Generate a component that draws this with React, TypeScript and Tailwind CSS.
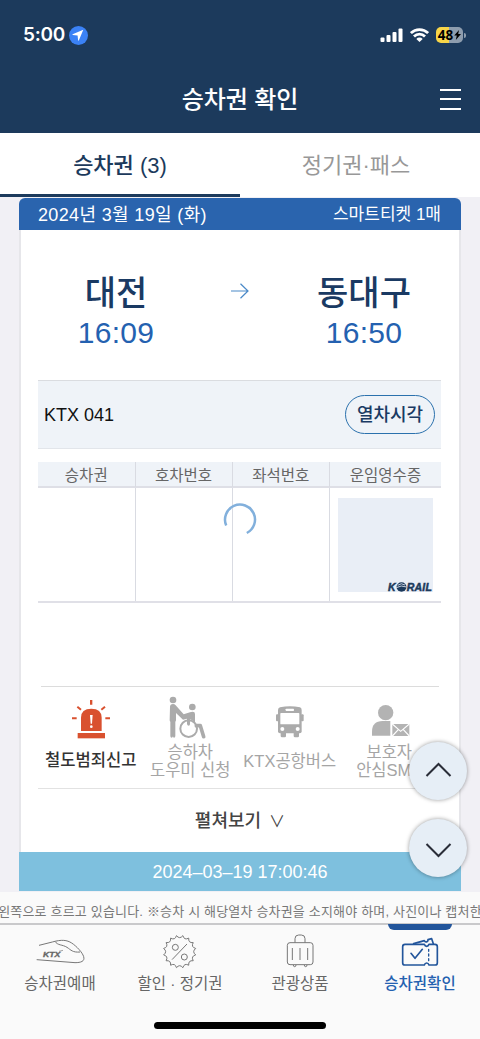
import type { ReactNode } from "react";

const services = [
  { lines: ["철도범죄신고"], icon: <SirenIcon />, active: true },
  { lines: ["승하차", "도우미 신청"], icon: <WheelchairIcon />, active: false },
  { lines: ["KTX공항버스"], icon: <BusIcon />, active: false },
  { lines: ["보호자", "안심SMS"], icon: <GuardianIcon />, active: false },
];

const navItems = [
  { label: "승차권예매", icon: <TrainIcon />, active: false },
  { label: "할인 · 정기권", icon: <DiscountIcon />, active: false },
  { label: "관광상품", icon: <SuitcaseIcon />, active: false },
  { label: "승차권확인", icon: <TicketIcon />, active: true },
];

function SirenIcon() {
  return (
    <svg className="h-[44px] w-[42px]" viewBox="0 0 126 132" fill="#d9512f">
      <path d="M60 15h7v14h-7zM6 67h14v6H6zM106 67h14v6h-14z" />
      <path d="M22 35l11 9M105 35l-11 9" stroke="#d9512f" strokeWidth={6} />
      <path d="M33 108V68q0-27 31-27t31 27v40z" />
      <path d="M23 114h82v16H23z" />
      <path d="M60 60h8l-2 26h-4z" fill="#fff" />
      <circle cx={64} cy={95} r={4} fill="#fff" />
    </svg>
  );
}

function WheelchairIcon() {
  return (
    <svg className="h-[44px] w-[42px]" viewBox="0 0 126 132" fill="#ababab">
      <circle cx={12} cy={15} r={10} />
      <path d="M3 36q0-9 9-9 5 0 8 4l24 27 19-6q3-2 8-2 7 0 7 7v26q-6-8-15-10v14q0 5-4 5t-5-5V71l-12 3-21-20v21q0 3-2 5v43q0 5-4 5-3 0-3-4-1 4-4 4-4 0-4-5V80q-2-2-2-5z" />
      <circle cx={70} cy={36} r={10} />
      <circle cx={59} cy={101} r={25} fill="none" stroke="#ababab" strokeWidth={6} />
      <path d="M82 92h12l10 33" fill="none" stroke="#ababab" strokeWidth={11} strokeLinecap="round" strokeLinejoin="round" />
    </svg>
  );
}

function BusIcon() {
  return (
    <svg className="h-[44px] w-[42px]" viewBox="0 0 126 132" fill="#ababab">
      <path d="M27 45q0-6 6-8 30-6 60 0 5 2 5 8v64q0 6-6 6H33q-6 0-6-6z" />
      <rect x={21} y={58} width={8} height={21} rx={3} />
      <rect x={96} y={58} width={8} height={21} rx={3} />
      <rect x={35} y={108} width={16} height={19} rx={4} />
      <rect x={74} y={108} width={16} height={19} rx={4} />
      <rect x={50} y={41} width={25} height={7} rx={2} fill="#fff" />
      <rect x={34} y={54} width={57} height={34} rx={2} fill="#fff" />
      <circle cx={40} cy={102} r={6} fill="#fff" />
      <circle cx={86} cy={102} r={6} fill="#fff" />
    </svg>
  );
}

function GuardianIcon() {
  return (
    <svg className="h-[44px] w-[42px]" viewBox="0 0 126 132" fill="#b3b3b3">
      <circle cx={53} cy={53} r={23} />
      <path d="M12 122v-12q0-32 32-32h23v44z" />
      <path d="M69 83h60v44H69z" fill="#fff" />
      <path d="M73 87h51v36H73z" />
      <path d="M73 87l25 22 26-22M73 123l18-19M124 123l-18-19" fill="none" stroke="#fff" strokeWidth={3.5} />
    </svg>
  );
}

function TrainIcon() {
  return (
    <svg className="h-[36px] w-[50px]" viewBox="0 0 150 108" fill="none" stroke="#777" strokeWidth={3}>
      <path d="M12 34l40-10C80 16 96 18 110 27c15 10 32 28 36 41 4 14-8 18-26 18L5 77" />
      <path d="M60 22c8 13 22 9 36 18 12 8 17 16 39 14" />
      <text x={24} y={68} fill="#666" stroke="#666" strokeWidth={1} fontSize={24} fontWeight={700} fontStyle="italic" fontFamily="Liberation Sans, sans-serif" textLength={52} lengthAdjust="spacingAndGlyphs">
        KTX
      </text>
      <path d="M72 52l12-3" strokeWidth={2} />
    </svg>
  );
}

function DiscountIcon() {
  const teeth = 16;
  const point = (step: number, r: number) => {
    const a = ((step - 0.5) / teeth) * Math.PI * 2;
    return `${(74 + Math.sin(a) * r).toFixed(1)} ${(53 - Math.cos(a) * r).toFixed(1)}`;
  };
  let d = `M${point(0, 49)}`;
  for (let i = 0; i < teeth; i++) {
    d += `Q${point(i + 0.5, 36)} ${point(i + 1, 49)}`;
  }
  return (
    <svg className="h-[36px] w-[50px]" viewBox="0 0 150 108" fill="none" stroke="#777" strokeWidth={3} strokeLinejoin="round">
      <path d={d + "Z"} />
      <circle cx={61} cy={40} r={9} />
      <circle cx={88} cy={69} r={9} />
      <path d="M95 31L52 76" strokeLinecap="round" />
    </svg>
  );
}

function SuitcaseIcon() {
  return (
    <svg className="h-[36px] w-[50px]" viewBox="0 0 150 108" fill="none" stroke="#777" strokeWidth={3}>
      <rect x={37} y={26} width={77} height={66} rx={8} />
      <path d="M60 26V14q0-11 11-11h8q11 0 11 11v12M52 42v36M75 42v36M98 42v36" />
      <path d="M55 93q0 5 4 5t4-5M88 93q0 5 4 5t4-5" />
    </svg>
  );
}

function TicketIcon() {
  return (
    <svg className="h-[36px] w-[50px]" viewBox="0 0 150 108" fill="none" stroke="#22559b" strokeWidth={5} strokeLinejoin="round" strokeLinecap="round">
      <path d="M30 31h58q2 6 7 6t7-6h18q7 0 7 7v48q0 7-7 7h-18q-2-6-7-6t-7 6H30q-7 0-7-7V38q0-7 7-7z" />
      <path d="M56 29l32-9q4 5 8 3t3-6l11-3 5 15" />
      <path d="M48 58l12 15 22-27" />
      <path d="M101 46v38" strokeWidth={4} strokeDasharray="6 8" />
    </svg>
  );
}

function StatusBar() {
  return (
    <div className="flex h-[70px] items-center justify-between pl-[23px] pr-[14px]">
      <div className="flex items-center gap-[4px]">
        <span className="font-['Inter',sans-serif] text-[19px] font-semibold leading-5 tracking-[-0.3px]">5:00</span>
        <span className="flex size-[19px] items-center justify-center rounded-full bg-[#3b82f6]">
          <svg className="size-[12px]" viewBox="0 0 12 12" fill="#fff">
            <path d="M11.3.7L.6 5.2q-.6.4.2.7l4.8.5.5 4.8q.3.8.7.2z" />
          </svg>
        </span>
      </div>
      <div className="flex items-center gap-[7px]">
        <svg className="h-[14px] w-[23px]" viewBox="0 0 23 14" fill="#fff">
          <rect x={0.5} y={9.5} width={4} height={4.5} rx={1} />
          <rect x={6.5} y={7} width={4} height={7} rx={1} />
          <rect x={12.5} y={4} width={4} height={10} rx={1} />
          <rect x={18.5} y={0.5} width={4} height={13.5} rx={1} />
        </svg>
        <svg className="h-[14px] w-[19px]" viewBox="0 0 19 14" fill="none" stroke="#fff" strokeWidth={2.8}>
          <path d="M.9 5.1a12.3 12.3 0 0 1 17.2 0M4 8.4a7.8 7.8 0 0 1 11 0" />
          <path d="M9.5 14L6.300 10.900a4.500 4.500 0 0 1 6.400 0z" fill="#fff" stroke="none" />
        </svg>
        <div className="flex items-center gap-px">
          <div className="flex h-4 w-[27px] items-center justify-center rounded-[5px] bg-[linear-gradient(90deg,#f7d548_49%,#8e9dae_49%)] font-['Open_Sans',sans-serif] text-[13.5px] font-bold leading-4 text-black">
            48
            <svg className="ml-px h-[10px] w-[7px]" viewBox="0 0 7 10">
              <path d="M5 0L.2 5.6h2.6L1.8 10 7 4.1H4.2z" />
            </svg>
          </div>
          <span className="h-[5px] w-[2px] rounded-r bg-[#8e9dae]" />
        </div>
      </div>
    </div>
  );
}

function KorailLogo() {
  return (
    <div className="-mb-px flex h-[12px] items-center font-['Liberation_Sans',sans-serif] text-[10.5px] font-bold italic leading-3 text-[#1c3a5c]">
      <span className="[-webkit-text-stroke:0.5px_#1c3a5c]">K</span>
      <svg className="h-[10px] w-[11px]" viewBox="0 0 33 30">
        <ellipse cx={16.5} cy={15} rx={15} ry={14} fill="#1c3a5c" />
        <path d="M5 10q11-9 22-1M1 17q14-9 31-2" fill="none" stroke="#e9eef6" strokeWidth={2.5} />
      </svg>
      <span className="tracking-[0.2px] [-webkit-text-stroke:0.5px_#1c3a5c]">RAIL</span>
    </div>
  );
}

function Station({ name, time }: { name: string; time: string }) {
  return (
    <div className="flex w-[156px] flex-col items-center">
      <p className="pt-px text-[34px] font-medium leading-[42px] text-[#1a3a63]">{name}</p>
      <p className="-mt-px text-[30px] leading-[40px] tracking-[0.3px] text-[#2461b0]">{time}</p>
    </div>
  );
}

function HeadCell({ children }: { children: ReactNode }) {
  return (
    <div className="flex items-center justify-center border-r border-[#d9dbe2] pt-[3px] last:border-r-0">{children}</div>
  );
}

export default function App() {
  return (
    <div className="relative mx-auto flex h-[1039px] w-[480px] flex-col overflow-hidden bg-[#f1f0f5] font-['Liberation_Sans','Noto_Sans_CJK_KR',sans-serif] whitespace-nowrap">
      <header className="h-[133px] shrink-0 bg-[#1c3a5c] text-white">
        <StatusBar />
        <div className="grid h-[58px] grid-cols-[60px_1fr_60px] items-center">
          <h1 className="col-start-2 pt-[2px] text-center text-[24px] font-medium leading-8 tracking-[-0.1px]">승차권 확인</h1>
          <button className="flex flex-col items-end gap-[7.5px] pr-[19px]" aria-label="메뉴">
            <span className="h-[2px] w-[21px] bg-white" />
            <span className="h-[2px] w-[21px] bg-white" />
            <span className="h-[2px] w-[21px] bg-white" />
          </button>
        </div>
      </header>

      <div className="grid h-[64px] shrink-0 grid-cols-2 bg-white text-[22px] leading-8">
        <button className="border-b-[3px] border-[#1c3a5c] pt-[5px] font-medium text-[#1c3a5c]">승차권 (3)</button>
        <button className="border-b-[3px] border-white pt-[5px] pr-[8px] text-[#989898]">정기권·패스</button>
      </div>

      {/* Ticket card */}
      <main className="mx-[19px] mt-px flex h-[694px] shrink-0 flex-col">
        <div className="flex h-[32px] shrink-0 items-center justify-between rounded-t-[6px] bg-[#2a64ae] px-[19px] pt-[2px] text-white">
          <span className="text-[18px] tracking-[0.35px]">2024년 3월 19일 (화)</span>
          <span className="pr-px text-[17px]">스마트티켓 1매</span>
        </div>

        <div className="flex h-[622px] shrink-0 flex-col border-x-2 border-[#e6e6ea] bg-white">
          <div className="mx-[17px] flex h-[150px] shrink-0 justify-between pt-[41px]">
            <Station name="대전" time="16:09" />
            <svg className="mt-[12px] h-[16px] w-[18px]" viewBox="0 0 18 16" fill="none" stroke="#4a89c8" strokeWidth={1.2}>
              <path d="M0 8h17M9.500 .8L17 8l-7.500 7.200" />
            </svg>
            <Station name="동대구" time="16:50" />
          </div>

          <div className="ml-[17px] mr-[18px] flex h-[69px] shrink-0 items-center justify-between border-y border-t-[#dadce0] border-b-[#e2e5ea] bg-[#eff3f8] px-[6px]">
            <span className="pt-[2px] text-[18px] text-[#111]">KTX 041</span>
            <button className="h-[39px] w-[90px] rounded-full border-[1.5px] border-[#2b71ad] pt-[2px] text-[18px] font-medium text-[#1a3a63]">
              열차시각
            </button>
          </div>

          <div className="ml-[17px] mr-[18px] mt-[13px] h-[140.500px] shrink-0 border-b-2 border-[#e0e0e7]">
            <div className="grid h-[26px] grid-cols-[97.5px_97px_97.5px_1fr] border-b-2 border-[#dedfe6] bg-[#eff3f8] text-[15.5px] leading-[22px] text-[#666]">
              <HeadCell>승차권</HeadCell>
              <HeadCell>호차번호</HeadCell>
              <HeadCell>좌석번호</HeadCell>
              <HeadCell>운임영수증</HeadCell>
            </div>
            <div className="grid h-[113px] grid-cols-[97.5px_97px_97.5px_1fr]">
              <div className="border-r border-[#d9dbe2]" />
              <div className="border-r border-[#d9dbe2]" />
              <div className="border-r border-[#d9dbe2]" />
              <div className="px-[8px] pt-[10px]">
                <div className="flex h-[94px] w-[95px] items-end justify-end bg-[#e9eef6] pr-px">
                  <KorailLogo />
                </div>
              </div>
            </div>
          </div>

          <div className="mx-[20px] mt-[83px] grid h-[102px] shrink-0 grid-cols-4 border-t border-[#dcdcdc]">
            {services.map((item) => (
              <div key={item.lines[0]} className="flex flex-col items-center pt-[8px]">
                {item.icon}
                <div
                  className={
                    item.active
                      ? "mt-[4px] flex h-[36px] flex-col items-center justify-center text-[16.600px] font-medium leading-[18px] text-[#333]"
                      : "mt-[4px] flex h-[36px] flex-col items-center justify-center text-[16.500px] leading-[18px] text-[#a5a5a5]"
                  }
                >
                  {item.lines.map((line) => (
                    <span key={line}>{line}</span>
                  ))}
                </div>
              </div>
            ))}
          </div>
          <div className="mx-[17px] flex flex-1 items-center justify-center gap-[8px] border-t border-[#e2e2e2] pt-[3px] text-[18px] text-[#444]">
            <span className="font-medium">펼쳐보기</span>
            <span className="text-[16px]">∨</span>
          </div>
        </div>

        <div className="flex h-[39px] shrink-0 items-center justify-center bg-[#7ec0de] pt-px text-[18px] text-white">
          2024–03–19 17:00:46
        </div>
      </main>

      {/* Scrolling notice */}
      <div className="flex h-[33px] shrink-0 items-center justify-center border-b-2 border-[#c9c9cb] bg-[#fafafa] pt-[9px] text-[13px] tracking-[0.18px] text-[#777]">
        <p>왼쪽으로 흐르고 있습니다. ※승차 시 해당열차 승차권을 소지해야 하며, 사진이나 캡처한</p>
      </div>

      <nav className="grid flex-1 grid-cols-4 bg-[#fafafa] text-[15.5px] text-[#666]">
        {navItems.map((item) => (
          <div key={item.label} className="relative flex flex-col items-center pt-[9px]">
            {item.active && <span className="absolute -top-px h-[6px] w-[64px] rounded-b-[6px] bg-[#22559b]" />}
            {item.icon}
            <span className={item.active ? "mt-[3px] font-medium leading-[22px] text-[#2461b0]" : "mt-[3px] leading-[22px]"}>
              {item.label}
            </span>
          </div>
        ))}
      </nav>

      {/* Home indicator */}
      <span className="absolute bottom-[10px] left-[154px] h-[7px] w-[172px] rounded-full bg-black" />

      {/* Loading spinner */}
      <svg className="absolute left-[223px] top-[502px] size-[34px]" viewBox="0 0 34 34" fill="none" stroke="#82b0dc" strokeWidth={2.5}>
        <path d="M3.200 23.500A15 15 0 1 1 23.800 31" />
      </svg>

      <button className="absolute left-[409px] top-[742px] flex size-[58px] items-center justify-center rounded-full bg-[#e6eef6] shadow-[0_0_4px_rgba(0,0,0,0.4)]" aria-label="위로">
        <svg className="-mt-1 h-[15px] w-[27px]" viewBox="0 0 27 15" fill="none" stroke="#2a2d38" strokeWidth={2}>
          <path d="M1.500 14l12-12 12 12" />
        </svg>
      </button>
      <button className="absolute left-[409px] top-[819px] flex size-[58px] items-center justify-center rounded-full bg-[#e6eef6] shadow-[0_0_4px_rgba(0,0,0,0.4)]" aria-label="아래로">
        <svg className="mt-1 h-[15px] w-[27px]" viewBox="0 0 27 15" fill="none" stroke="#2a2d38" strokeWidth={2}>
          <path d="M1.500 1l12 12 12-12" />
        </svg>
      </button>
    </div>
  );
}
